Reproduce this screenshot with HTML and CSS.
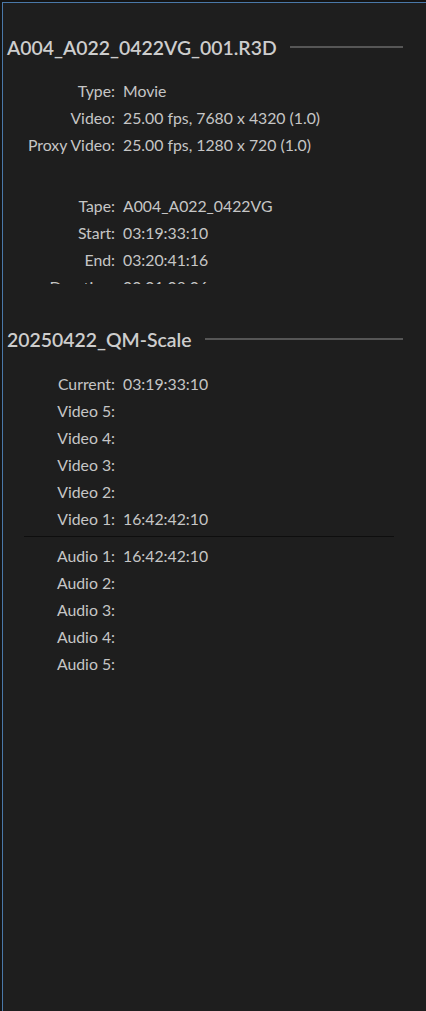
FILE: index.html
```html
<!DOCTYPE html>
<html>
<head>
<meta charset="utf-8">
<link rel="stylesheet" href="styles.css">
</head>
<body>
<div class="panel">
  <section class="clip-section">
    <div class="head">
      <h2 class="title">A004_A022_0422VG_001.R3D</h2>
      <div class="rule"></div>
    </div>
    <div class="rows">
      <div class="label">Type:</div><div class="value">Movie</div>
      <div class="label">Video:</div><div class="value">25.00 fps, 7680 x 4320 (1.0)</div>
      <div class="label">Proxy Video:</div><div class="value">25.00 fps, 1280 x 720 (1.0)</div>
    </div>
    <div class="rows spaced">
      <div class="label">Tape:</div><div class="value">A004_A022_0422VG</div>
      <div class="label">Start:</div><div class="value">03:19:33:10</div>
      <div class="label">End:</div><div class="value">03:20:41:16</div>
      <div class="label">Duration:</div><div class="value">00:01:08:06</div>
    </div>
  </section>
  <section class="seq-section">
    <div class="head">
      <h2 class="title">20250422_QM-Scale</h2>
      <div class="rule"></div>
    </div>
    <div class="rows">
      <div class="label">Current:</div><div class="value">03:19:33:10</div>
      <div class="label">Video 5:</div><div class="value"></div>
      <div class="label">Video 4:</div><div class="value"></div>
      <div class="label">Video 3:</div><div class="value"></div>
      <div class="label">Video 2:</div><div class="value"></div>
      <div class="label">Video 1:</div><div class="value">16:42:42:10</div>
    </div>
    <div class="divider"></div>
    <div class="rows">
      <div class="label">Audio 1:</div><div class="value">16:42:42:10</div>
      <div class="label">Audio 2:</div><div class="value"></div>
      <div class="label">Audio 3:</div><div class="value"></div>
      <div class="label">Audio 4:</div><div class="value"></div>
      <div class="label">Audio 5:</div><div class="value"></div>
    </div>
  </section>
</div>
</body>
</html>
```
FILE: styles.css
```css
html, body {
  margin: 0;
  padding: 0;
  background: #141414;
  height: 100%;
}
body {
  padding: 2px 0 0 2px;
  box-sizing: border-box;
  overflow: hidden;
}
.panel {
  height: 100%;
  background: #1e1e1e;
  border-left: 1px solid #4a78a8;
  border-top: 1px solid #4a78a8;
  box-sizing: border-box;
  font-family: Lato, "Open Sans", sans-serif;
  font-size: 15.8px;
  color: #c6c6c6;
}
.clip-section {
  height: 281px;
  overflow: hidden;
  padding-top: 31px;
  box-sizing: border-box;
}
.seq-section {
  padding-top: 42px;
}
.head {
  display: flex;
  align-items: center;
  gap: 13px;
  padding: 0 23px 0 4px;
  height: 26px;
}
.title {
  margin: 0;
  font-size: 19.4px;
  font-weight: 600;
  color: #cdcdcd;
  white-space: nowrap;
}
.rule {
  flex: 1;
  height: 2px;
  background: #565656;
}
.rows {
  display: grid;
  grid-template-columns: 112px 1fr;
  column-gap: 8px;
  line-height: 27px;
}
.head + .rows {
  margin-top: 17px;
}
.seq-section .head + .rows {
  margin-top: 18px;
}
.rows.spaced {
  margin-top: 34px;
}
.label {
  text-align: right;
  white-space: nowrap;
}
.value {
  white-space: nowrap;
  min-height: 27px;
}
.divider {
  height: 1px;
  background: #0e0e0e;
  margin: 4px 32px 5px 21px;
}
```
